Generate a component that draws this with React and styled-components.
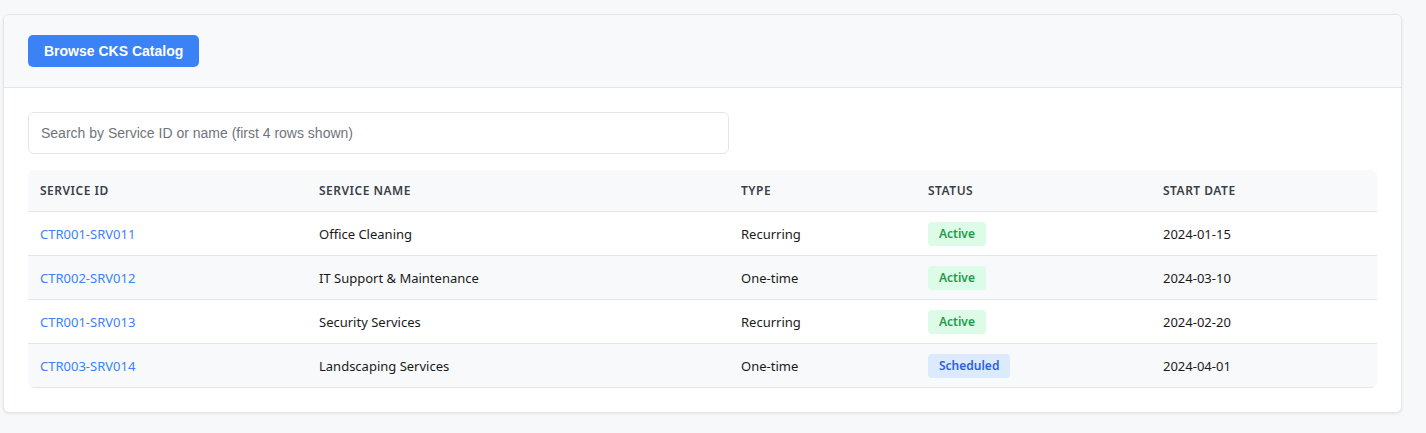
import React from 'react';
import styled, { createGlobalStyle } from 'styled-components';

const GlobalStyle = createGlobalStyle`
  body {
    margin: 0;
    background: #f7f8fa;
    font-family: "Noto Sans", "Open Sans", sans-serif;
  }
`;

const Page = styled.div`
  padding: 14px 24px 20px 3px;
`;

const Card = styled.div`
  background: #ffffff;
  border: 1px solid #e3e5e9;
  border-radius: 6px;
  box-shadow: 0 1px 3px rgba(0, 0, 0, 0.08);
  overflow: hidden;
`;

const Header = styled.div`
  background: #f8f9fb;
  border-bottom: 1px solid #e3e5e9;
  padding: 20px 24px;
  display: flex;
  align-items: center;
`;

const Button = styled.button`
  height: 32px;
  padding: 0 16px;
  background: #3b82f6;
  color: #ffffff;
  border: none;
  border-radius: 5px;
  font-family: "Liberation Sans", Arial, sans-serif;
  font-weight: 700;
  font-size: 14px;
  cursor: pointer;
`;

const Body = styled.div`
  padding: 24px;
`;

const Search = styled.input`
  display: block;
  box-sizing: border-box;
  width: 701px;
  height: 42px;
  padding: 0 12px;
  border: 1px solid #e3e5e9;
  border-radius: 6px;
  font-family: "Liberation Sans", Arial, sans-serif;
  font-size: 14px;
  margin-bottom: 16px;
  &::placeholder {
    color: #70757c;
  }
`;

const Table = styled.table`
  width: 100%;
  border-collapse: separate;
  border-spacing: 0;
  border-radius: 6px;
  overflow: hidden;
  font-size: 13px;
  color: #1a1a1a;
`;

const Th = styled.th`
  text-align: left;
  background: #f8f9fb;
  height: 41px;
  padding: 0 12px;
  font-size: 12px;
  font-weight: 600;
  letter-spacing: 0.5px;
  text-transform: uppercase;
  color: #3a3f47;
  border-bottom: 1px solid #e3e5e9;
  width: ${p => p.$w};
`;

const Row = styled.tr`
  background: ${p => (p.$striped ? '#f8f9fb' : '#ffffff')};
`;

const Td = styled.td`
  height: 43px;
  padding: 0 12px;
  border-bottom: 1px solid #e3e5e9;
`;

const Link = styled.a`
  color: #3b82f6;
  text-decoration: none;
`;

const Badge = styled.span`
  display: inline-block;
  padding: 3px 11px;
  line-height: 18px;
  border-radius: 4px;
  font-size: 12px;
  font-weight: 600;
  background: ${p => (p.$kind === 'Scheduled' ? '#dbeafe' : '#dcfce7')};
  color: ${p => (p.$kind === 'Scheduled' ? '#2f5fd8' : '#1f9a4c')};
`;

const services = [
  { id: 'CTR001-SRV011', name: 'Office Cleaning', type: 'Recurring', status: 'Active', start: '2024-01-15' },
  { id: 'CTR002-SRV012', name: 'IT Support & Maintenance', type: 'One-time', status: 'Active', start: '2024-03-10' },
  { id: 'CTR001-SRV013', name: 'Security Services', type: 'Recurring', status: 'Active', start: '2024-02-20' },
  { id: 'CTR003-SRV014', name: 'Landscaping Services', type: 'One-time', status: 'Scheduled', start: '2024-04-01' },
];

function App() {
  return (
    <>
      <GlobalStyle />
      <Page>
        <Card>
          <Header>
            <Button>Browse CKS Catalog</Button>
          </Header>
          <Body>
            <Search placeholder="Search by Service ID or name (first 4 rows shown)" />
            <Table>
              <thead>
                <tr>
                  <Th $w="255px">Service ID</Th>
                  <Th $w="398px">Service Name</Th>
                  <Th $w="163px">Type</Th>
                  <Th $w="211px">Status</Th>
                  <Th>Start Date</Th>
                </tr>
              </thead>
              <tbody>
                {services.map((s, i) => (
                  <Row key={s.id} $striped={i % 2 === 1}>
                    <Td><Link href="#">{s.id}</Link></Td>
                    <Td>{s.name}</Td>
                    <Td>{s.type}</Td>
                    <Td><Badge $kind={s.status}>{s.status}</Badge></Td>
                    <Td>{s.start}</Td>
                  </Row>
                ))}
              </tbody>
            </Table>
          </Body>
        </Card>
      </Page>
    </>
  );
}

export default App;
